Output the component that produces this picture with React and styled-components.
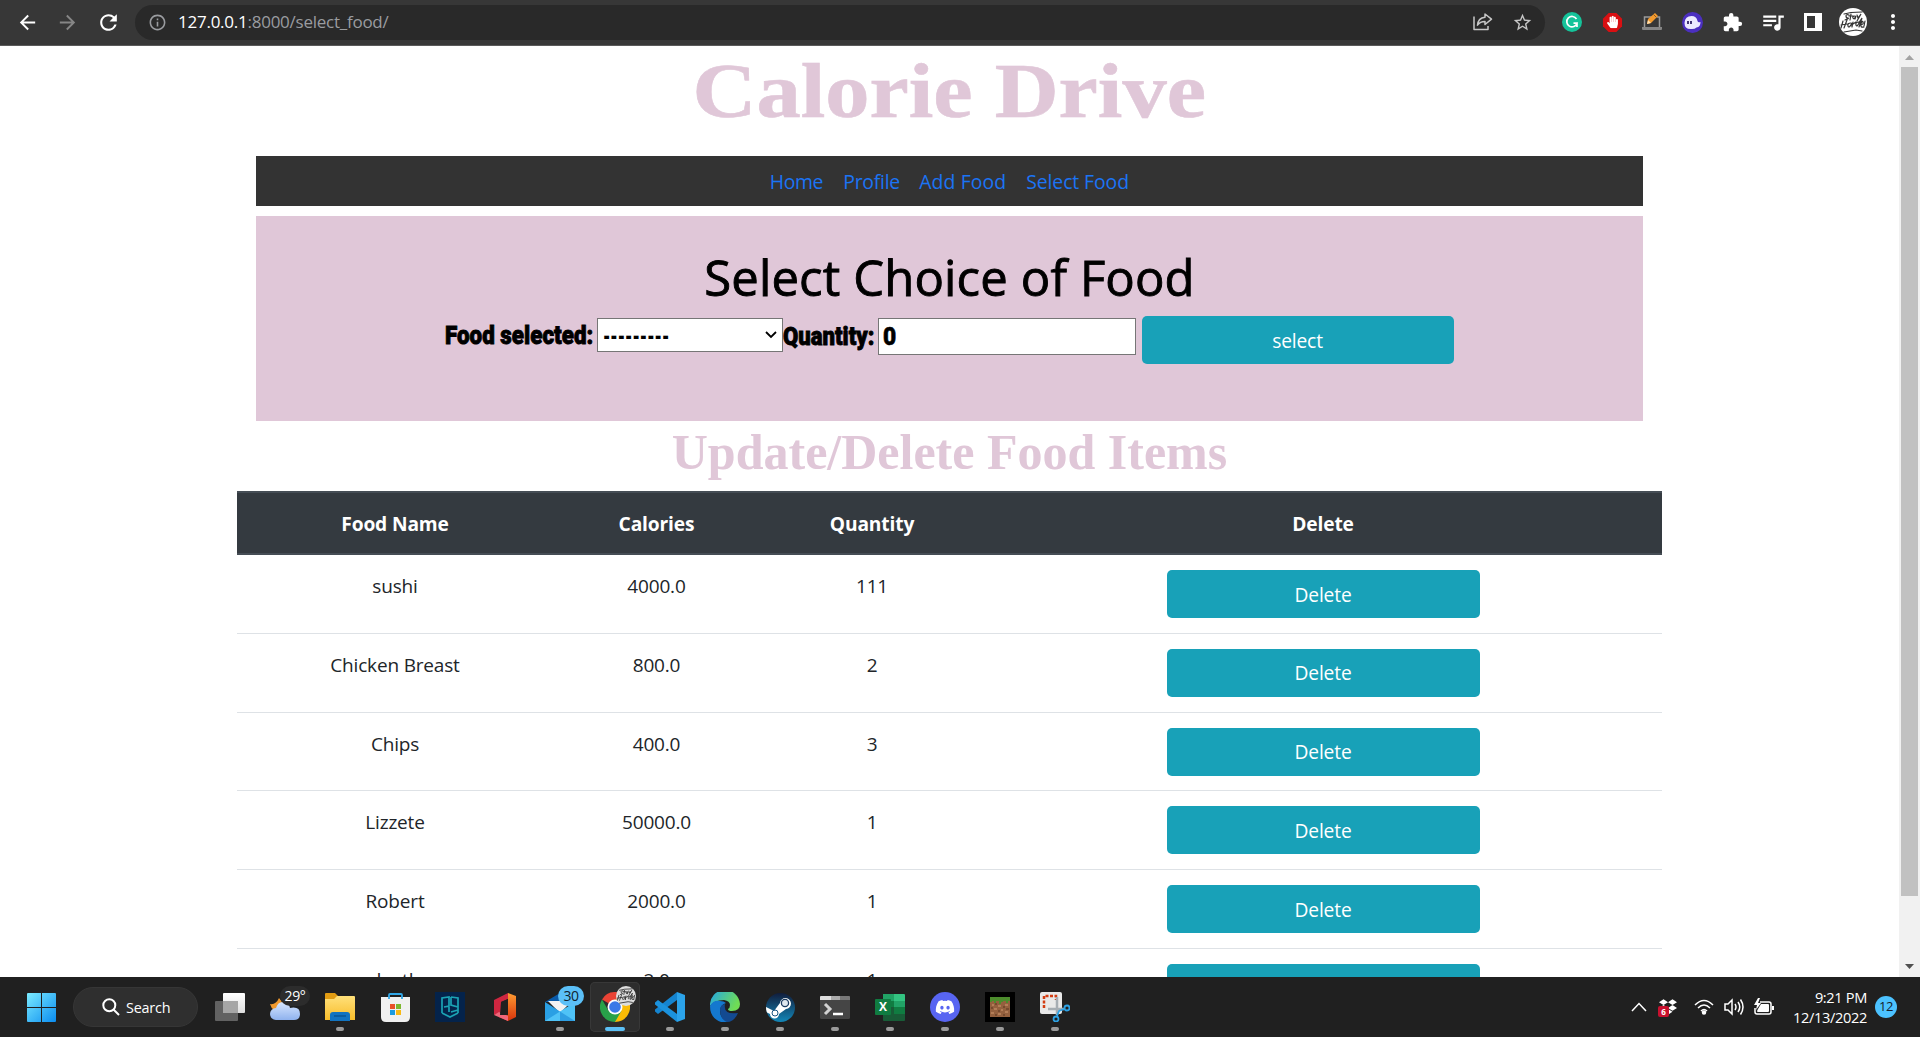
import React from 'react';
import styled, { createGlobalStyle } from 'styled-components';
import { MdArrowBack, MdArrowForward, MdRefresh, MdInfoOutline, MdStarBorder, MdExtension, MdMoreVert, MdQueueMusic } from 'react-icons/md';
import { FaDiscord, FaHandPaper, FaDropbox } from 'react-icons/fa';

const GlobalStyle = createGlobalStyle`
  * { box-sizing: border-box; }
  body { margin: 0; background: #fff; overflow: hidden; font-family: 'Open Sans', 'Noto Sans', sans-serif; }
  svg { display: block; flex: none; }
`;

const Screen = styled.div`
  display: flex;
  flex-direction: column;
  width: 1920px;
  height: 1037px;
  overflow: hidden;
`;

/* Browser toolbar */
const Toolbar = styled.header`
  display: flex;
  align-items: center;
  flex: none;
  height: 46px;
  padding: 0 7px 1px 12px;
  background: #373737;
  border-bottom: 1px solid #5a5a5a;
  color: #fff;
`;
const NavButtons = styled.div`
  display: flex;
  align-items: center;
  flex: none;
  width: 123px;
`;
const NavButton = styled.span`
  display: flex;
  width: 40px;
  padding-left: 4px;
  color: ${(p) => (p.$dim ? '#868686' : '#fff')};
`;
const AddressBar = styled.div`
  display: flex;
  align-items: center;
  flex: none;
  width: 1410px;
  height: 35px;
  padding: 0 12px 0 13px;
  border-radius: 18px;
  background: #292929;
  color: #9a9ca0;
`;
const Address = styled.span`
  flex: 1;
  margin-left: 11px;
  font-size: 17px;
  letter-spacing: -0.25px;
  line-height: 24px;
  b { font-weight: 400; color: #fff; }
`;
const AddressActions = styled.div`
  display: flex;
  gap: 19px;
  align-items: center;
  color: #c6c6c6;
`;
const Extensions = styled.div`
  display: flex;
  align-items: center;
  margin-left: 7px;
  flex: none;
`;
const Extension = styled.span`
  display: flex;
  justify-content: center;
  width: 40.1px;
`;
const Badge = styled.span`
  display: flex;
  align-items: center;
  justify-content: center;
  width: 20px;
  height: 20px;
  border-radius: 50%;
  background: ${(p) => p.$bg};
`;

/* Page */
const Viewport = styled.div`
  display: flex;
  height: 931px;
  flex: none;
`;
const Page = styled.main`
  display: flex;
  flex-direction: column;
  align-items: center;
  width: 1899px;
  height: 931px;
  overflow: hidden;
  background: #fff;
  color: #212529;
`;
const SiteTitle = styled.h1`
  margin: 0;
  flex: none;
  height: 110px;
  font: 700 79px/90px 'Liberation Serif', 'Times New Roman', serif;
  color: #e0c7d8;
  transform: scaleX(1.12);
  -webkit-text-stroke: 0.6px #e0c7d8;
  white-space: nowrap;
`;
const SiteNav = styled.nav`
  display: flex;
  justify-content: center;
  gap: 20px;
  width: 1387px;
  height: 50px;
  flex: none;
  margin-bottom: 10px;
  padding-top: 10px;
  background: #333;
`;
const NavLink = styled.a`
  color: #1b74f5;
  font-size: 19.4px;
  line-height: 32px;
  width: ${(p) => p.$w}px;
  letter-spacing: ${(p) => p.$ls || 0}px;
  white-space: nowrap;
`;
const FormPanel = styled.section`
  width: 1387px;
  height: 205px;
  flex: none;
  background: #e0c7d8;
  color: #000;
`;
const FormTitle = styled.h2`
  margin: 0;
  padding-top: 30px;
  text-align: center;
  font-size: 49px;
  font-weight: 400;
  line-height: 62px;
  letter-spacing: 0.15px;
  -webkit-text-stroke: 0.9px #000;
`;
const FormRow = styled.div`
  display: flex;
  align-items: flex-start;
  margin-top: 8px;
  padding-left: 189px;
`;
const Label = styled.label`
  width: ${(p) => p.$w}px;
  flex: none;
  padding-top: ${(p) => p.$top}px;
  font: 900 26.5px/30px Roboto, sans-serif;
  white-space: nowrap;
  span {
    display: inline-block;
    transform: scaleX(${(p) => p.$scale});
    transform-origin: 0 50%;
    -webkit-text-stroke: 0.9px #000;
  }
`;
const SelectBox = styled.div`
  display: flex;
  align-items: center;
  justify-content: space-between;
  width: 186px;
  height: 34px;
  flex: none;
  margin: 2px 0 0 0;
  padding: 0 5px 0 5px;
  border: 1px solid #767676;
  background: #fff;
`;
const Dashes = styled.span`
  width: 110px;
  font: 900 26px/30px Roboto, sans-serif;
  transform: scaleX(0.63);
  transform-origin: 0 50%;
  padding-top: 1px;
`;
const QuantityBox = styled.div`
  width: 258px;
  height: 37px;
  flex: none;
  margin: 2px 6px 0 0;
  padding: 1px 4px;
  border: 1px solid #767676;
  background: #fff;
  font: 900 26.5px/32px Roboto, sans-serif;
  -webkit-text-stroke: 0.6px #000;
  span { display: inline-block; transform: scaleX(0.86); transform-origin: 0 50%; }
`;
const Button = styled.button`
  display: block;
  width: ${(p) => (p.$center ? 313 : 312)}px;
  height: 48px;
  padding: 1px 0 0;
  margin: ${(p) => (p.$center ? '0 auto' : '0')};
  border: 0;
  border-radius: 5px;
  background: #18a1b8;
  color: #fff;
  font: 400 19.2px/30px 'Open Sans', sans-serif;
  letter-spacing: -0.15px;
`;
const SectionTitle = styled.h2`
  margin: 0 0 9px;
  padding-top: 1px;
  flex: none;
  font: 700 50px/60px 'Liberation Serif', 'Times New Roman', serif;
  color: #e0c7d8;
  white-space: nowrap;
`;
const Grid = styled.div`
  display: grid;
  grid-template-columns: 316px 207px 224px 678px;
  width: 1425px;
  text-align: center;
  flex: none;
`;
const HeadRow = styled(Grid)`
  height: 64px;
  background: #343a40;
  border: solid #454d55;
  border-width: 2px 0;
  color: #fff;
  font-size: 19.2px;
  font-weight: 700;
  line-height: 61px;
  letter-spacing: -0.15px;
`;
const Row = styled(Grid)`
  height: 78.75px;
  border-bottom: 1px solid #dee2e6;
  padding-top: 15px;
`;
const Cell = styled.div`
  font-size: 19px;
  line-height: 33px;
  letter-spacing: -0.17px;
`;

const Scrollbar = styled.div`
  display: flex;
  flex-direction: column;
  align-items: center;
  width: 21px;
  background: #f1f1f1;
  padding: 9px 0 8px;
`;
const Thumb = styled.div`
  width: 17px;
  height: 829px;
  margin: 7px 0 auto;
  background: #c1c1c1;
`;

/* Taskbar */
const Taskbar = styled.footer`
  display: flex;
  align-items: center;
  height: 60px;
  flex: none;
  padding: 0 23px 0 27px;
  background: #202020;
  color: #fff;
`;
const SearchPill = styled.div`
  display: flex;
  align-items: center;
  gap: 6px;
  width: 125px;
  height: 40px;
  margin: 0 7px 0 17px;
  padding-left: 28px;
  border-radius: 20px;
  background: #2f2f2f;
  border: 1px solid #363636;
  font-size: 14.4px;
  letter-spacing: -0.2px;
`;
const Apps = styled.div`
  display: flex;
  gap: 5px;
`;
const AppSlot = styled.div`
  position: relative;
  display: flex;
  align-items: center;
  justify-content: center;
  width: 50px;
  height: 50px;
  border-radius: 5px;
  background: ${(p) => (p.$active ? '#2d2d2d' : 'transparent')};
  box-shadow: ${(p) => (p.$active ? 'inset 0 0 0 1px #383838' : 'none')};
  &::after {
    content: '';
    display: ${(p) => (p.$running || p.$active ? 'block' : 'none')};
    position: absolute;
    bottom: 1px;
    width: ${(p) => (p.$active ? 20 : 8)}px;
    height: 4px;
    border-radius: 2px;
    background: ${(p) => (p.$active ? '#5cc0f5' : '#9a9a9a')};
  }
`;
const AppBadge = styled.span`
  position: absolute;
  top: 4px;
  left: ${(p) => p.$left}px;
  width: ${(p) => p.$w}px;
  height: 20px;
  border-radius: 10px;
  background: ${(p) => p.$bg};
  color: ${(p) => p.$fg};
  font-size: 14px;
  line-height: 20px;
  letter-spacing: -0.4px;
  text-align: center;
`;
const AvatarBadge = styled.span`
  position: absolute;
  top: 4px;
  left: 26px;
`;
const Tray = styled.div`
  display: flex;
  align-items: center;
  margin-left: auto;
`;
const TrayIcon = styled.span`
  position: relative;
  display: flex;
  margin-right: ${(p) => p.$gap}px;
`;
const DropCount = styled.span`
  position: absolute;
  left: -1px;
  bottom: -1px;
  width: 11px;
  height: 11px;
  border-radius: 2px;
  background: #c8102e;
  font-size: 8px;
  font-weight: 700;
  line-height: 11px;
  text-align: center;
`;
const Clock = styled.div`
  width: 76px;
  padding-bottom: 1px;
  text-align: right;
  font-size: 14.6px;
  line-height: 20px;
  letter-spacing: -0.35px;
  white-space: nowrap;
`;
const Notifications = styled.span`
  width: 22px;
  height: 22px;
  margin-left: 8px;
  border-radius: 50%;
  background: #4cc2ff;
  color: #14202a;
  font-size: 13px;
  line-height: 21px;
  letter-spacing: -0.4px;
  text-align: center;
`;

const Avatar = ({ size, bg = '#fff' }) => (
  <svg width={size} height={size} viewBox="0 0 28 28">
    <circle cx="14" cy="14" r="14" fill={bg} />
    <g stroke="#333" strokeWidth="1.2" fill="none" strokeLinecap="round">
      <path d="M5 6l7-1.500 11-.5M10 7q-3-1-3 1t2 2-3 2M12 6l-1 6M10 8h4M16 8q-3 0-2 2t3-2l-1 3M18 7l1 3 3-4-4 7" />
      <path d="M4 13l-2 7M8 12l-3 8M2 17l6-1M12 15q-4 0-3 3t4-3v4M14 14l-1 5M14 16l3-2M20 14q-4 0-3 3t4-4l2-3-3 9M22 17q3-1 2-3t-2 2 3 3M26 13l-1 5M5 24l12-2 6 1" />
    </g>
  </svg>
);
const Share = () => (
  <svg width="20" height="20" viewBox="0 0 20 20" fill="none" stroke="currentColor" strokeWidth="1.5">
    <path d="M1 4.500V17.500H15V14M12 2l6.500 5.200L12 12.500V9.500Q7 9.500 4.500 13.200Q5 6 12 5.200Z" strokeLinejoin="round" />
  </svg>
);
const GrammarG = () => (
  <svg width="14" height="14" viewBox="0 0 14 14" fill="none" stroke="#fff" strokeWidth="1.7">
    <path d="M11.500 4A5.200 5.200 0 1 0 12 8.200H8.500M12 8v4" />
  </svg>
);
const Stop = () => (
  <svg width="21" height="21" viewBox="0 0 22 22">
    <path d="M7 1h8l6 6v8l-6 6H7l-6-6V7z" fill="#d90f12" />
    <g transform="translate(4.500 4)"><FaHandPaper size={13} color="#fff" /></g>
  </svg>
);
const Laptop = () => (
  <svg width="20" height="20" viewBox="0 0 20 20">
    <path d="M2.500 15V5h15v10" fill="none" stroke="#9b9b9b" strokeWidth="1.500" />
    <path d="M0 15h20v2q0 1-1 1H1q-1 0-1-1z" fill="#858585" />
    <path d="M5 12l1-5 7-6 3 3-7 7z" fill="#f39a2d" /><path d="M5 12l1-4 3 3z" fill="#ffe0b0" /><path d="M11.500 2.500l3 3" stroke="#8b5720" />
  </svg>
);
const Ghost = () => (
  <svg width="21" height="21" viewBox="0 0 21 21">
    <circle cx="10.500" cy="10.500" r="10.500" fill="#4b2fc0" />
    <path d="M2.500 11Q3 4 9.500 4q5 0 6 5 .5 2 3 1 0 5-4 5.500-2 2-6 1.500-6 0-6-6z" fill="#eceaff" />
    <path d="M6 9v3M9 9v3" stroke="#24175e" strokeWidth="1.700" />
  </svg>
);
const SidePanel = () => (
  <svg width="18" height="18" viewBox="0 0 18 18"><path fillRule="evenodd" fill="#fff" d="M0 0h18v18H0zM3 3v12h8V3z" /></svg>
);
const Windows = () => (
  <svg width="29" height="29" viewBox="0 0 29 29">
    <defs><linearGradient id="win" x1="0" y1="0" x2="29" y2="29" gradientUnits="userSpaceOnUse"><stop stopColor="#7bebff" /><stop offset="1" stopColor="#0a8cf0" /></linearGradient></defs>
    <path fill="url(#win)" d="M1 0h13v14H0V1q0-1 1-1zM15 0h13q1 0 1 1v13H15zM0 15h14v14H1q-1 0-1-1zM15 15h14v13q0 1-1 1H15z" />
  </svg>
);
const Magnifier = () => (
  <svg width="18" height="18" viewBox="0 0 18 18" fill="none" stroke="#fff" strokeWidth="2"><circle cx="7.300" cy="7.300" r="6" /><path d="M11.500 11.500L17 17" /></svg>
);
const TaskView = () => (
  <svg width="30" height="28" viewBox="0 0 30 28">
    <defs><linearGradient id="tv" x2="0" y2="1"><stop stopColor="#fff" /><stop offset="1" stopColor="#ddd" /></linearGradient></defs>
    <rect y="8" width="23" height="20" rx="1" fill="#626262" /><rect x="8" width="22" height="20" rx="1" fill="url(#tv)" /><path d="M8 8h15v12H8z" fill="#a6a6a6" />
  </svg>
);
const Weather = () => (
  <svg width="30" height="30" viewBox="0 0 30 30">
    <defs><linearGradient id="cl" x2="0" y2="1"><stop stopColor="#d8e7ff" /><stop offset="1" stopColor="#8fb2ee" /></linearGradient></defs>
    <path d="M0 12q6 1 9-6 5 5 2 11l-7 1q-3-2-4-6z" fill="#f19a2e" />
    <path d="M6 28a6 6 0 0 1 0-12q2-7 8-6 5 0 6 6 10-2 10 6 0 6-6 6z" fill="url(#cl)" />
  </svg>
);
const Folder = () => (
  <svg width="30" height="28" viewBox="0 0 30 28">
    <defs><linearGradient id="fo" x2="0" y2="1"><stop stopColor="#ffe07a" /><stop offset="1" stopColor="#f8bd2a" /></linearGradient></defs>
    <path d="M0 1q0-1 1-1h9l3 3v6H0z" fill="#e29c12" /><path d="M0 6h9l3-3h17q1 0 1 1v23H0z" fill="url(#fo)" />
    <path d="M5 28v-6q0-3 3-3h14q3 0 3 3v6z" fill="#1173c0" /><path d="M9 23h12" stroke="#07477d" />
  </svg>
);
const Store = () => (
  <svg width="29" height="29" viewBox="0 0 29 29">
    <path d="M8 7V2q0-1 1-1h11q1 0 1 1v5" fill="none" stroke="#32a8e8" strokeWidth="1.800" />
    <path d="M0 4h29v20q0 5-5 5H5q-5 0-5-5z" fill="#f0f0f0" /><path d="M8 6V4M21 6V4" stroke="#32a8e8" strokeWidth="1.800" />
    <path d="M9 11h5v5H9z" fill="#e8512a" /><path d="M15 11h5v5h-5z" fill="#7db72f" /><path d="M9 17h5v5H9z" fill="#1b9bdf" /><path d="M15 17h5v5h-5z" fill="#f8b912" />
  </svg>
);
const PgApp = () => (
  <svg width="30" height="30" viewBox="0 0 30 30"><path d="M0 0h30v30H0z" fill="#04234b" />
    <path d="M7 21V6l7-1v9l-5 1M16 5l7 1v15M16 5v8l7 2M14 14v6M7 21l8 4 8-4M16 20l7-2" fill="none" stroke="#1ba3b5" strokeWidth="1.700" /></svg>
);
const Office = () => (
  <svg width="22" height="28" viewBox="0 0 22 28">
    <defs><linearGradient id="of" x2="0" y2="1"><stop stopColor="#ff9c32" /><stop offset="1" stopColor="#d8330b" /></linearGradient></defs>
    <path d="M0 7L14 0v6L7 9v10l-7 3z" fill="#cf2640" /><path d="M14 0l8 3v21l-8 4-9-4 1-2h8z" fill="url(#of)" /><path d="M0 22l5-3 9 4v5z" fill="#f0667a" /><path d="M7 9l7-3v16H6z" fill="#202020" />
  </svg>
);
const Mail = () => (
  <svg width="30" height="28" viewBox="0 0 30 28">
    <path d="M0 9L15 0l15 9z" fill="#0a5aa8" /><path d="M3 8h24l-12 12z" fill="#f3f3f3" /><path d="M0 9l30 19H0z" fill="#2aa0e4" /><path d="M30 9L0 28h30z" fill="#4fc3f7" /><path d="M15 18.500L30 28H15z" fill="#2f9fe3" />
  </svg>
);
const Chrome = () => (
  <svg width="30" height="30" viewBox="0 0 30 30">
    <path d="M15 15L2 7.500A15 15 0 0 1 28 7.500H15z" fill="#ea4335" /><path d="M15 15V7.500H28A15 15 0 0 1 15 30z" fill="#fbbc05" /><path d="M2 7.500A15 15 0 0 0 15 30L21.500 18.700 8.500 18.700z" fill="#28a149" />
    <circle cx="15" cy="15" r="7.500" fill="#fff" /><circle cx="15" cy="15" r="5.800" fill="#3b78e7" />
  </svg>
);
const Code = () => (
  <svg width="30" height="30" viewBox="0 0 30 30">
    <path d="M22 0l8 3v24l-8 3z" fill="#2ba3ea" /><path d="M22 0v8L3 22 0 19.500v-2z" fill="#1584cf" /><path d="M22 30v-8L3 8 0 10.500v2z" fill="#1b92dd" />
  </svg>
);
const Edge = () => (
  <svg width="30" height="30" viewBox="0 0 30 30">
    <defs><linearGradient id="e1" x2="1" y2="0.400"><stop stopColor="#22a6e8" /><stop offset="1" stopColor="#6fdc55" /></linearGradient></defs>
    <path d="M0 14A15 15 0 0 1 30 12q0 7-8 7-4 0-4-2 2-1 2-4 0-4-6-5Q4 8 0 14z" fill="url(#e1)" />
    <path d="M0 14q3-6 10-5 4 0 6 2-6 2-6 8 0 8 9 11-3 1-8 0Q0 26 0 14z" fill="#1478cf" /><path d="M10 18q0-5 5-6-2 11 13 9-4 9-11 9-7-3-7-12z" fill="#134a91" />
  </svg>
);
const Steam = () => (
  <svg width="29" height="29" viewBox="0 0 29 29">
    <defs><linearGradient id="st" x2="0" y2="1"><stop stopColor="#111d3c" /><stop offset="1" stopColor="#1387b8" /></linearGradient><clipPath id="sc"><circle cx="14.500" cy="14.500" r="14.500" /></clipPath></defs>
    <circle cx="14.500" cy="14.500" r="14.500" fill="url(#st)" />
    <g clipPath="url(#sc)"><path d="M0 14l8 4 6-8a5.500 5.500 0 1 1 6 6l-7 5a4.500 4.500 0 0 1-9 0l-4-2z" fill="#fff" /></g>
    <circle cx="19" cy="10" r="3.600" fill="#dfe7ee" stroke="#1c3b60" strokeWidth="1.300" /><circle cx="9" cy="20" r="3" fill="none" stroke="#1c5684" />
  </svg>
);
const Terminal = () => (
  <svg width="30" height="23" viewBox="0 0 30 23"><rect width="30" height="23" rx="1.500" fill="#454545" /><path d="M0 4V1q0-1 1-1h10v4z" fill="#ddd" /><path d="M11 0h9v4h-9z" fill="#aaa" /><path d="M20 0h9q1 0 1 1v3H20z" fill="#777" /><path d="M5 8l5 5-5 5" fill="none" stroke="#d2d2d2" strokeWidth="3" /><path d="M13 18h10" stroke="#fff" strokeWidth="2.500" /></svg>
);
const ExcelText = styled.span`
  position: absolute;
  left: 10px;
  top: 17px;
  width: 16px;
  height: 16px;
  background: #107c41;
  border-radius: 1px;
  font-size: 12px;
  font-weight: 700;
  line-height: 16px;
  text-align: center;
`;
const Excel = () => (
  <><svg width="29" height="27" viewBox="0 0 29 27"><path d="M7 0h11v7H7z" fill="#21a366" /><path d="M18 0h10q1 0 1 1v6H18z" fill="#33c481" /><path d="M7 7h11v6H7z" fill="#107c41" /><path d="M18 7h11v6H18z" fill="#21a366" /><path d="M7 13h11v14H8q-1 0-1-1z" fill="#185c37" /><path d="M18 13h11v7H18z" fill="#107c41" /><path d="M18 20h11v6q0 1-1 1H18z" fill="#185c37" /></svg><ExcelText>X</ExcelText></>
);
const DiscordDisc = styled(Badge)`
  width: 30px;
  height: 30px;
`;
const Grass = () => (
  <svg width="30" height="30" viewBox="0 0 30 30"><path d="M0 0h30v30H0z" fill="#000" /><path d="M5 5h20v20H5z" fill="#94603e" /><path d="M5 5h20v4h-2v2h-2V9h-3v1h-2v2h-2V9h-3v2H9V9H7v1H5z" fill="#4c8c2c" /><path d="M7 13h2M13 14h3M20 13h3M9 17h3M16 18h2M6 21h3M13 22h3M20 20h3" stroke="#bd8760" strokeWidth="1.500" /><path d="M10 12h2M18 15h2M6 16h2M13 19h2M21 17h3M10 23h2M18 23h2" stroke="#6c432a" strokeWidth="1.500" /></svg>
);
const Snip = () => (
  <svg width="30" height="30" viewBox="0 0 30 30"><rect width="22" height="22" rx="2" fill="#e9e9e9" /><path d="M4 16V4h12v4" fill="none" stroke="#d33c12" strokeWidth="2.500" strokeDasharray="3 1.500" /><path d="M17 5v18M8 17h16" stroke="#a6adb3" strokeWidth="2.500" /><circle cx="16" cy="27" r="2.500" fill="none" stroke="#2da1e3" strokeWidth="1.800" /><circle cx="27" cy="16" r="2.500" fill="none" stroke="#2da1e3" strokeWidth="1.800" /><path d="M17 24l2-5 5-2" fill="none" stroke="#2da1e3" strokeWidth="1.800" /></svg>
);
const line = { fill: 'none', stroke: '#fff', strokeWidth: 1.5 };

const foods = [
  ['sushi', '4000.0', '111'],
  ['Chicken Breast', '800.0', '2'],
  ['Chips', '400.0', '3'],
  ['Lizzete', '50000.0', '1'],
  ['Robert', '2000.0', '1'],
  ['death', '2.0', '1'],
];

export default function App() {
  return (
    <Screen>
      <GlobalStyle />
      <Toolbar>
        <NavButtons>
          <NavButton><MdArrowBack size={23} /></NavButton>
          <NavButton $dim><MdArrowForward size={23} /></NavButton>
          <NavButton><MdRefresh size={25} /></NavButton>
        </NavButtons>
        <AddressBar>
          <MdInfoOutline size={19} />
          <Address><b>127.0.0.1</b>:8000/select_food/</Address>
          <AddressActions><Share /><MdStarBorder size={21} /></AddressActions>
        </AddressBar>
        <Extensions>
          <Extension><Badge $bg="#15c39a"><GrammarG /></Badge></Extension>
          <Extension><Stop /></Extension>
          <Extension><Laptop /></Extension>
          <Extension><Ghost /></Extension>
          <Extension><MdExtension size={21} /></Extension>
          <Extension><MdQueueMusic size={26} /></Extension>
          <Extension><SidePanel /></Extension>
          <Extension><Avatar size={28} /></Extension>
          <Extension><MdMoreVert size={24} /></Extension>
        </Extensions>
      </Toolbar>
      <Viewport>
        <Page>
          <SiteTitle>Calorie Drive</SiteTitle>
          <SiteNav>
            <NavLink $w={53.5} $ls={-0.4}>Home</NavLink>
            <NavLink $w={56} $ls={-0.25}>Profile</NavLink>
            <NavLink $w={87} $ls={0.1}>Add Food</NavLink>
            <NavLink $w={103} $ls={-0.1}>Select Food</NavLink>
          </SiteNav>
          <FormPanel>
            <FormTitle>Select Choice of Food</FormTitle>
            <FormRow>
              <Label $w={151.5} $top={4} $scale={0.845}><span>Food selected:</span></Label>
              <SelectBox>
                <Dashes>---------</Dashes>
                <svg width="12" height="8" viewBox="0 0 12 8" fill="none" stroke="#000" strokeWidth="1.800"><path d="M1 1l5 5 5-5" /></svg>
              </SelectBox>
              <Label $w={95} $top={5} $scale={0.835}><span>Quantity:</span></Label>
              <QuantityBox><span>0</span></QuantityBox>
              <Button>select</Button>
            </FormRow>
          </FormPanel>
          <SectionTitle>Update/Delete Food Items</SectionTitle>
          <HeadRow>
            <span>Food Name</span><span>Calories</span><span>Quantity</span><span>Delete</span>
          </HeadRow>
          {foods.map(([name, calories, quantity]) => (
            <Row key={name}>
              <Cell>{name}</Cell>
              <Cell>{calories}</Cell>
              <Cell>{quantity}</Cell>
              <Cell><Button $center>Delete</Button></Cell>
            </Row>
          ))}
        </Page>
        <Scrollbar>
          <svg width="9" height="5" viewBox="0 0 9 5"><path d="M0 5l4.500-5L9 5z" fill="#a3a3a3" /></svg>
          <Thumb />
          <svg width="9" height="5" viewBox="0 0 9 5"><path d="M0 0h9L4.500 5z" fill="#505050" /></svg>
        </Scrollbar>
      </Viewport>
      <Taskbar>
        <Windows />
        <SearchPill><Magnifier />Search</SearchPill>
        <Apps>
          <AppSlot><TaskView /></AppSlot>
          <AppSlot><Weather /><AppBadge $left={20} $w={30} $bg="#2c2c2c" $fg="#fff">29°</AppBadge></AppSlot>
          <AppSlot $running><Folder /></AppSlot>
          <AppSlot><Store /></AppSlot>
          <AppSlot><PgApp /></AppSlot>
          <AppSlot><Office /></AppSlot>
          <AppSlot $running><Mail /><AppBadge $left={23} $w={26} $bg="#5bc0f8" $fg="#10222e">30</AppBadge></AppSlot>
          <AppSlot $active><Chrome /><AvatarBadge><Avatar size={20} bg="#ddd" /></AvatarBadge></AppSlot>
          <AppSlot $running><Code /></AppSlot>
          <AppSlot $running><Edge /></AppSlot>
          <AppSlot $running><Steam /></AppSlot>
          <AppSlot $running><Terminal /></AppSlot>
          <AppSlot $running><Excel /></AppSlot>
          <AppSlot $running><DiscordDisc $bg="#5865f2"><FaDiscord size={20} /></DiscordDisc></AppSlot>
          <AppSlot $running><Grass /></AppSlot>
          <AppSlot $running><Snip /></AppSlot>
        </Apps>
        <Tray>
          <TrayIcon $gap={12}><svg width="16" height="10" viewBox="0 0 16 10" {...line}><path d="M1 9l7-7.500L15 9" /></svg></TrayIcon>
          <TrayIcon $gap={17}><FaDropbox size={18} /><DropCount>6</DropCount></TrayIcon>
          <TrayIcon $gap={10}><svg width="20" height="16" viewBox="0 0 20 16" {...line}><path d="M1 6q9-9 18 0M4 9q6-6 12 0M7 12q3-3 6 0" /><circle cx="10" cy="13.500" r="1.500" fill="#fff" /></svg></TrayIcon>
          <TrayIcon $gap={10}><svg width="20" height="18" viewBox="0 0 20 18" {...line}><path d="M1 6h3l4-4v14l-4-4H1zM11 6q2 3 0 6M14 4q3.500 5 0 10M16.500 1.500q5 7.500 0 15" /></svg></TrayIcon>
          <TrayIcon $gap={17}><svg width="20" height="18" viewBox="0 0 20 18"><path d="M6 4h9q2 0 2 2v8q0 2-2 2H3q-2 0-2-2v-4" {...line} /><path d="M7 6h7q1 0 1 1v6q0 1-1 1H4q-1 0-1-1l1-2zM18 8h2v4h-2zM4 0L0 7h3l-1 5 5-7H4l2-5z" fill="#fff" /></svg></TrayIcon>
          <Clock>9:21 PM<br />12/13/2022</Clock>
          <Notifications>12</Notifications>
        </Tray>
      </Taskbar>
    </Screen>
  );
}
